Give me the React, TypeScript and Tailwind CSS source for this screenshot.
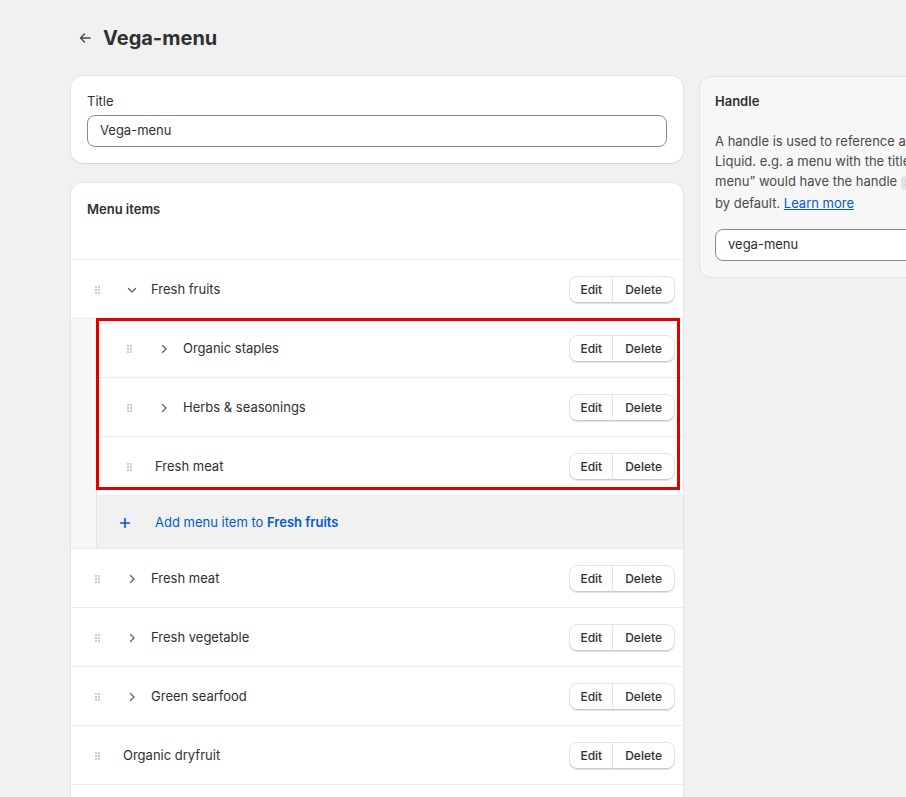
import React from 'react';

type Item = { label: string; chevron?: 'right' | 'down' | null };

const topItems: Item[] = [
  { label: 'Fresh meat', chevron: 'right' },
  { label: 'Fresh vegetable', chevron: 'right' },
  { label: 'Green searfood', chevron: 'right' },
  { label: 'Organic dryfruit', chevron: null },
];

const nestedItems: Item[] = [
  { label: 'Organic staples', chevron: 'right' },
  { label: 'Herbs & seasonings', chevron: 'right' },
  { label: 'Fresh meat', chevron: null },
];

function DragHandle() {
  return (
    <svg width="5" height="8" viewBox="0 0 5 8" className="text-[#8a8a8a]">
      <circle cx="1" cy="1" r="0.8" fill="currentColor" />
      <circle cx="4" cy="1" r="0.8" fill="currentColor" />
      <circle cx="1" cy="4" r="0.8" fill="currentColor" />
      <circle cx="4" cy="4" r="0.8" fill="currentColor" />
      <circle cx="1" cy="7" r="0.8" fill="currentColor" />
      <circle cx="4" cy="7" r="0.8" fill="currentColor" />
    </svg>
  );
}

function Chevron({ dir }: { dir: 'right' | 'down' }) {
  return (
    <svg width="12" height="12" viewBox="0 0 12 12" className="text-[#616161]">
      {dir === 'right' ? (
        <path d="M4.5 2.5 8 6l-3.5 3.5" fill="none" stroke="currentColor" strokeWidth="1.3" strokeLinecap="round" strokeLinejoin="round" />
      ) : (
        <path d="M2.5 4.5 6 8l3.5-3.5" fill="none" stroke="currentColor" strokeWidth="1.3" strokeLinecap="round" strokeLinejoin="round" />
      )}
    </svg>
  );
}

function Actions() {
  return (
    <div className="flex h-[28px] rounded-lg border border-[#e3e3e3] bg-white text-[12px] font-medium text-[#303030] shadow-[inset_0_-1px_0_#c9c9c9]">
      <button className="px-[10px] border-r border-[#e3e3e3]">Edit</button>
      <button className="px-3">Delete</button>
    </div>
  );
}

function Row({ item, nested }: { item: Item; nested?: boolean }) {
  return (
    <div
      className={
        'flex items-center h-[59px] pt-px border-b border-[#ebebeb] bg-white pr-2 ' +
        (nested ? 'pl-[26px]' : 'pl-5')
      }
    >
      <div className="w-3 flex justify-center">
        <DragHandle />
      </div>
      {item.chevron ? (
        <>
          <div className="ml-[21px] w-4 flex justify-center">
            <Chevron dir={item.chevron} />
          </div>
          <span className="ml-[11px] text-[13px] text-[#303030]">{item.label}</span>
        </>
      ) : (
        <span className="ml-5 text-[13px] text-[#303030]">{item.label}</span>
      )}
      <div className="ml-auto">
        <Actions />
      </div>
    </div>
  );
}

export default function App() {
  return (
    <div
      className="min-h-screen w-full overflow-hidden bg-[#f1f1f1] pl-[71px] pt-6 text-[#303030]"
      style={{ fontFamily: 'Inter, "Noto Sans", sans-serif' }}
    >
      {/* header */}
      <div className="flex items-center h-7 mb-6">
        <button className="w-7 h-7 flex items-center justify-center text-[#4a4a4a]">
          <svg width="16" height="16" viewBox="0 0 16 16">
            <path d="M13 8H3.5M7.5 4 3.5 8l4 4" fill="none" stroke="currentColor" strokeWidth="1.5" strokeLinecap="round" strokeLinejoin="round" />
          </svg>
        </button>
        <h1 className="ml-1 text-[20px] font-bold text-[#303030]">Vega-menu</h1>
      </div>

      <div className="flex items-start gap-4 w-[940px]">
        {/* left column */}
        <div className="w-[612px] shrink-0 flex flex-col gap-5">
          <div className="bg-white rounded-xl shadow-[0_1px_0_rgba(0,0,0,0.07),0_0_0_1px_rgba(0,0,0,0.05)] px-4 pt-[15px] pb-4">
            <div className="text-[13px] leading-5 text-[#303030] mb-1">Title</div>
            <div className="h-8 rounded-lg border border-[#8a8a8a] px-3 flex items-center text-[13px] text-[#303030]">
              Vega-menu
            </div>
          </div>

          <div className="bg-white rounded-xl shadow-[0_1px_0_rgba(0,0,0,0.07),0_0_0_1px_rgba(0,0,0,0.05)] overflow-hidden">
            <div className="h-[77px] px-4 pt-4 border-b border-[#ebebeb]">
              <h2 className="text-[13px] leading-5 font-semibold">Menu items</h2>
            </div>

            <Row item={{ label: 'Fresh fruits', chevron: 'down' }} />

            <div className="relative bg-[#f7f7f7] pl-[25px]">
              <div className="border-l border-[#e3e3e3]">
                {nestedItems.map((it) => (
                  <Row key={it.label} item={it} nested />
                ))}
                <div className="flex items-center h-[52px] pt-px bg-[#f1f1f1] pl-[22px] text-[13px] text-[#005bd3]">
                  <svg width="12" height="12" viewBox="0 0 12 12">
                    <path d="M6 1.5v9M1.5 6h9" stroke="currentColor" strokeWidth="1.6" strokeLinecap="round" />
                  </svg>
                  <span className="ml-[24px]">
                    Add menu item to <span className="font-semibold">Fresh fruits</span>
                  </span>
                </div>
              </div>
              {/* annotation */}
              <div className="absolute left-[25px] top-[-1px] w-[584px] h-[172px] border-[3px] border-[#e00000] pointer-events-none" />
            </div>

            <div className="border-t border-[#ebebeb]">
              {topItems.map((it) => (
                <Row key={it.label} item={it} />
              ))}
              <div className="h-8 bg-white" />
            </div>
          </div>
        </div>

        {/* right column */}
        <div className="w-[310px] shrink-0 bg-[#f7f7f7] rounded-xl border border-[#e3e3e3] px-[15px] pt-[14px] pb-4">
          <h2 className="text-[13px] leading-5 font-semibold">Handle</h2>
          <p className="mt-5 text-[13px] leading-5 text-[#4a4a4a]">
            <span className="block whitespace-nowrap">A handle is used to reference a menu in</span>
            <span className="block whitespace-nowrap">Liquid. e.g. a menu with the title “Sidebar</span>
            <span className="block whitespace-nowrap h-5">
              menu” would have the handle{' '}
              <code className="rounded bg-[#e3e3e3] px-1 text-[12px] font-mono">sidebar-menu</code>
            </span>
            <span className="block whitespace-nowrap mt-[2px]">
              by default.{' '}
              <a className="text-[#005bd3] underline">Learn more</a>
            </span>
          </p>
          <div className="mt-4 h-8 rounded-lg border border-[#8a8a8a] bg-white px-3 flex items-center text-[13px] text-[#303030]">
            vega-menu
          </div>
        </div>
      </div>
    </div>
  );
}
